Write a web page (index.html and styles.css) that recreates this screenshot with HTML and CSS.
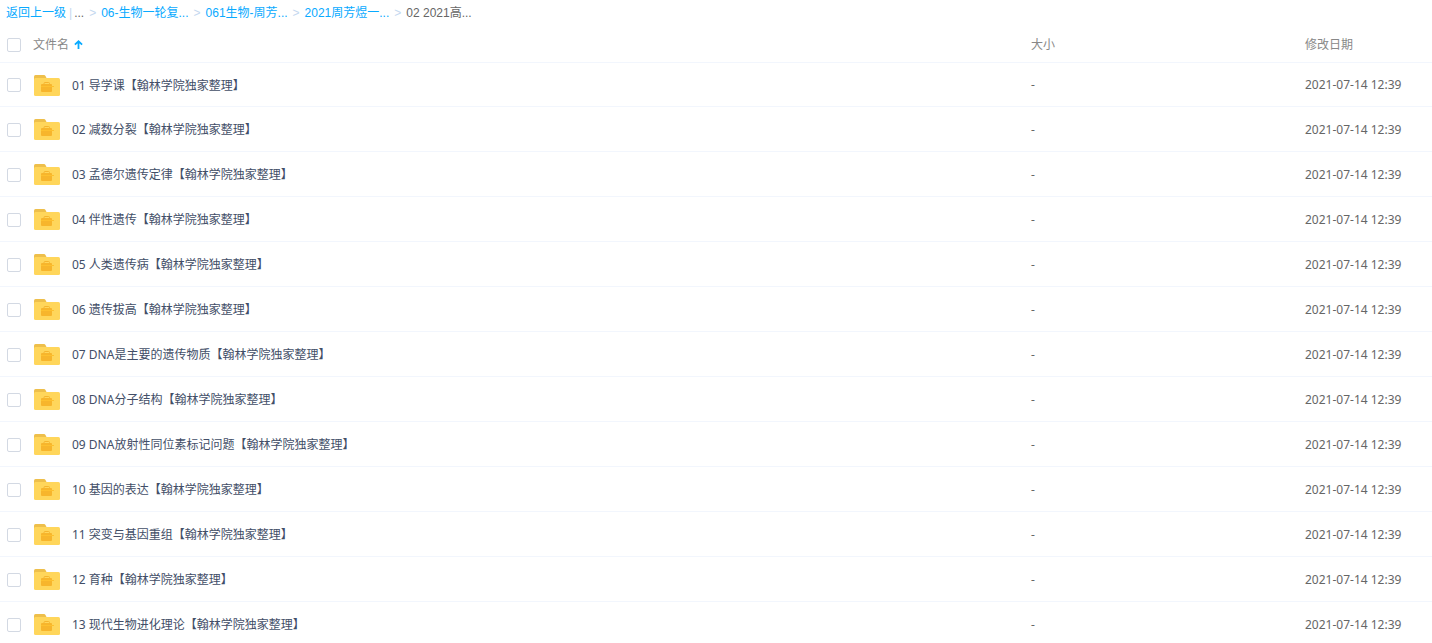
FILE: index.html
```html
<!DOCTYPE html>
<html lang="zh-CN">
<head>
    <meta charset="UTF-8">
    <meta name="viewport" content="width=device-width, initial-scale=1.0">
    <title>02 2021高...</title>
    <link rel="stylesheet" href="styles.css">
</head>
<body>
    <svg class="sprite" aria-hidden="true">
        <symbol id="folder" viewBox="0 0 26 21">
            <path fill="#eebf4b" d="M0 5V1.500Q0 0 1.500 0H10Q11 0 11.500 1L12.500 3V5z"/>
            <rect y="3" width="26" height="18" rx="1.500" fill="#ffd65b"/>
            <path fill="none" stroke="#f5b42e" d="M10 9V8.500Q10 7.500 11 7.500H14.500Q15.500 7.500 15.500 8.500V9"/>
            <path fill="#f7b52c" d="M7 11V10Q7 9 8 9H17Q18 9 18 10V11zM7 12H18V16Q18 17 17 17H8Q7 17 7 16z"/>
            <path fill="#fdc02f" d="M7 11H20V12H7z"/>
        </symbol>
    </svg>

    <nav class="breadcrumb">
        <a href="#">返回上一级</a>
        <span class="divider">|</span>
        <span>...</span>
        <span class="arrow">&gt;</span>
        <a href="#">06-生物一轮复...</a>
        <span class="arrow">&gt;</span>
        <a href="#">061生物-周芳...</a>
        <span class="arrow">&gt;</span>
        <a href="#">2021周芳煜一...</a>
        <span class="arrow">&gt;</span>
        <span>02 2021高...</span>
    </nav>

    <table class="file-table">
        <thead>
            <tr>
                <th class="col-name">
                    <div class="name-head">
                        <input type="checkbox" id="checkAll" aria-label="全选">
                        <span>文件名</span>
                        <svg class="sort-icon" viewBox="0 0 10 10"><path fill="none" stroke="#09aaff" stroke-width="2" d="M5 10V1.500M1 5.200L5 1.500L9 5.200"/></svg>
                    </div>
                </th>
                <th class="col-size">大小</th>
                <th class="col-date">修改日期</th>
            </tr>
        </thead>
        <tbody id="fileList"></tbody>
    </table>

    <script src="script.js"></script>
</body>
</html>
```

FILE: styles.css
```css
:root {
    --link-color: #09aaff;
    --text-color: #424e67;
    --line-color: #f2f6fd;
}

* {
    box-sizing: border-box;
    margin: 0;
    padding: 0;
}

body {
    font-family: "Noto Sans", "Noto Sans CJK SC", sans-serif;
    font-size: 12px;
    line-height: 18px;
    color: #666;
    background: #fff;
    overflow: hidden;
}

.sprite {
    display: none;
}

.breadcrumb {
    display: flex;
    gap: 5px;
    padding: 4px 6px;
    font-family: "Liberation Sans", "Noto Sans CJK SC", sans-serif;
    white-space: nowrap;
}

.breadcrumb a {
    color: var(--link-color);
    text-decoration: none;
}

.breadcrumb .arrow {
    color: #c4d8f0;
}

.breadcrumb .divider {
    color: #c4d8f0;
    margin: 0 -3px 0 -2px;
}

.file-table {
    width: 100%;
    table-layout: fixed;
    border-collapse: separate;
    border-spacing: 0;
}

th,
td {
    height: 45px;
    text-align: left;
    vertical-align: middle;
    border-bottom: 1px solid var(--line-color);
    white-space: nowrap;
}

th {
    height: 37px;
    padding-top: 1px;
    font-weight: normal;
    color: #888;
}

td {
    padding-top: 1px;
}

tbody tr:first-child td {
    height: 44px;
}

.col-name {
    width: 72%;
}

.col-date {
    width: 127px;
}

.name-head,
.name-cell {
    display: flex;
    align-items: center;
    padding-left: 7px;
}

.name-cell {
    height: 21px;
}

.name-head span {
    margin: 0 5px 0 12px;
}

.sort-icon {
    width: 9px;
    height: 9px;
}

.name-cell label {
    padding-top: 1px;
    color: var(--text-color);
}

.folder-icon {
    width: 26px;
    height: 21px;
    margin: 0 12px 0 13px;
}

input[type="checkbox"] {
    appearance: none;
    width: 14px;
    height: 14px;
    border: 1px solid #d3d9e3;
    border-radius: 2px;
    background: #fff;
}

input[type="checkbox"]:checked {
    background: var(--link-color);
    border-color: var(--link-color);
}
```

FILE: script.js
```js
const files = [
    '01 导学课【翰林学院独家整理】',
    '02 减数分裂【翰林学院独家整理】',
    '03 孟德尔遗传定律【翰林学院独家整理】',
    '04 伴性遗传【翰林学院独家整理】',
    '05 人类遗传病【翰林学院独家整理】',
    '06 遗传拔高【翰林学院独家整理】',
    '07 DNA是主要的遗传物质【翰林学院独家整理】',
    '08 DNA分子结构【翰林学院独家整理】',
    '09 DNA放射性同位素标记问题【翰林学院独家整理】',
    '10 基因的表达【翰林学院独家整理】',
    '11 突变与基因重组【翰林学院独家整理】',
    '12 育种【翰林学院独家整理】',
    '13 现代生物进化理论【翰林学院独家整理】'
];

document.getElementById('fileList').innerHTML = files.map((name, i) => `
    <tr>
        <td>
            <div class="name-cell">
                <input type="checkbox" id="file${i}">
                <svg class="folder-icon"><use href="#folder"/></svg>
                <label for="file${i}">${name}</label>
            </div>
        </td>
        <td>-</td>
        <td>2021-07-14 12:39</td>
    </tr>`).join('');

document.getElementById('checkAll').addEventListener('change', function(e) {
    document.querySelectorAll('#fileList input').forEach(box => {
        box.checked = e.target.checked;
    });
});
```
